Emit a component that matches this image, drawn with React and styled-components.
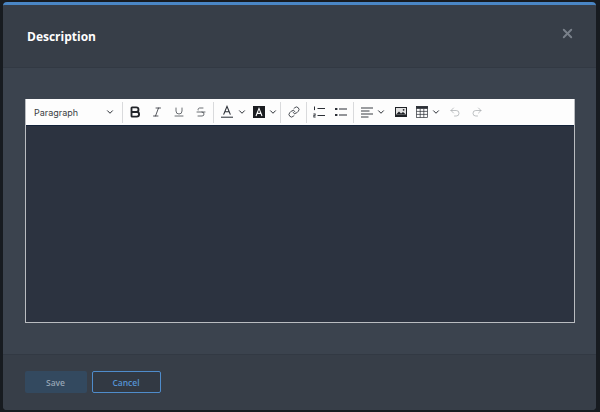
import React from 'react';
import styled, { createGlobalStyle } from 'styled-components';
import { Bold, Italic, Underline, Strikethrough, Link, Undo2, Redo2, ChevronDown, X } from 'lucide-react';

const GlobalStyle = createGlobalStyle`
  html, body {
    margin: 0;
    width: 600px;
    height: 412px;
    overflow: hidden;
    background: #171b20;
    font-family: "Open Sans", "Noto Sans", sans-serif;
  }
`;

const Chevron = () => <ChevronDown size={10} strokeWidth={2.4} color="#2b2f36" />;

const FontColorIcon = () => (
  <svg width="14" height="14" viewBox="0 0 14 14">
    <path d="M3.6 9.6 L7 1.4 L10.4 9.6 M4.8 6.8 H9.2" fill="none" stroke="#2b2f36" strokeWidth="1.1" />
    <rect x="1" y="11.6" width="12" height="1.3" fill="#55595f" />
  </svg>
);

const HighlightIcon = () => (
  <svg width="12" height="12" viewBox="0 0 12 12">
    <rect width="12" height="12" fill="#1b1d21" />
    <path d="M3 10 L6 2.4 L9 10 M4.1 7.4 H7.9" fill="none" stroke="#fff" strokeWidth="1.1" />
  </svg>
);

const NumberedIcon = () => (
  <svg width="12" height="12" viewBox="0 0 12 12" fill="#2b2f36">
    <rect x="4.5" y="2" width="7.5" height="1" />
    <rect x="4.5" y="9" width="7.5" height="1" />
    <rect x="1" y="0.5" width="1" height="3.6" />
    <path d="M0.4 7.6 H2.6 V9.8 H1.2 V10.6 H2.6 V11.4 H0.4 V9.1 H1.8 V8.4 H0.4 Z" />
  </svg>
);

const BulletIcon = () => (
  <svg width="12" height="10" viewBox="0 0 12 10" fill="#2b2f36">
    <rect x="0" y="1" width="2.4" height="2" />
    <rect x="4" y="1.5" width="8" height="1" />
    <rect x="0" y="7" width="2.4" height="2" />
    <rect x="4" y="7.5" width="8" height="1" />
  </svg>
);

const AlignIcon = () => (
  <svg width="12" height="11" viewBox="0 0 12 11" fill="#3a3e44">
    <rect y="0.5" width="12" height="1" />
    <rect y="3.5" width="8.5" height="1" />
    <rect y="6.5" width="12" height="1" />
    <rect y="9.5" width="7.5" height="1" />
  </svg>
);

const ImageIcon = () => (
  <svg width="12" height="10" viewBox="0 0 12 10">
    <rect width="12" height="10" fill="#1f2226" />
    <rect x="1" y="1" width="10" height="6.6" fill="#e2e2e2" />
    <path d="M1 7.6 L4 4.4 L6 6.4 L8 5 L11 7.6 Z" fill="#1f2226" />
    <circle cx="8.6" cy="2.8" r="0.9" fill="#1f2226" />
  </svg>
);

const TableIcon = () => (
  <svg width="12" height="12" viewBox="0 0 12 12" fill="none" stroke="#2b2f36" strokeWidth="0.7">
    <rect x="0.5" y="0.5" width="11" height="11" />
    <rect x="0.5" y="0.5" width="11" height="2" fill="#2b2f36" />
    <path d="M0.5 5.4 H11.5 M0.5 8.4 H11.5 M4.2 2.5 V11.5 M7.8 2.5 V11.5" />
  </svg>
);

const tools = [
  [
    { key: 'bold', icon: <Bold size={14} strokeWidth={3.2} color="#22252a" />, width: 22 },
    { key: 'italic', icon: <Italic size={12} strokeWidth={1.6} color="#2b2f36" />, width: 22 },
    { key: 'underline', icon: <Underline size={12} strokeWidth={1.5} color="#3a3e44" />, width: 22 },
    { key: 'strike', icon: <Strikethrough size={12} strokeWidth={1.5} color="#3a3e44" />, width: 22 },
  ],
  [
    { key: 'color', icon: <FontColorIcon />, caret: true, width: 36 },
    { key: 'highlight', icon: <HighlightIcon />, caret: true, width: 28 },
  ],
  [{ key: 'link', icon: <Link size={12} strokeWidth={1.7} color="#2b2f36" />, width: 23 }],
  [
    { key: 'numbered', icon: <NumberedIcon />, width: 21 },
    { key: 'bullet', icon: <BulletIcon />, width: 23 },
  ],
  [
    { key: 'align', icon: <AlignIcon />, caret: true, width: 36 },
    { key: 'image', icon: <ImageIcon />, width: 20 },
    { key: 'table', icon: <TableIcon />, caret: true, width: 34 },
    { key: 'undo', icon: <Undo2 size={12} strokeWidth={1.4} color="#a4a7ab" />, width: 20 },
    { key: 'redo', icon: <Redo2 size={12} strokeWidth={1.4} color="#a4a7ab" />, width: 24 },
  ],
];

const App = () => {
  return (
    <>
      <GlobalStyle />
      <Modal>
        <Header>
          <Title>Description</Title>
          <CloseButton><X size={15} strokeWidth={3} color="#79808a" /></CloseButton>
        </Header>
        <Body>
          <Editor>
            <Toolbar>
              <HeadingSelect>
                <span>Paragraph</span>
                <Chevron />
              </HeadingSelect>
              {tools.map((group, idx) => (
                <Group key={idx}>
                  {group.map(tool => (
                    <Tool key={tool.key} $width={tool.width}>
                      {tool.icon}
                      {tool.caret && <Chevron />}
                    </Tool>
                  ))}
                </Group>
              ))}
            </Toolbar>
            <Content />
          </Editor>
        </Body>
        <Footer>
          <SaveButton>Save</SaveButton>
          <CancelButton>Cancel</CancelButton>
        </Footer>
      </Modal>
    </>
  );
};

const Modal = styled.div`
  box-sizing: border-box;
  width: 593px;
  height: 408px;
  margin: 2px 0 0 3px;
  display: flex;
  flex-direction: column;
  background: #3a424c;
  border-top: 3px solid #4a86c5;
  border-radius: 4px;
  overflow: hidden;
`;

const Header = styled.div`
  box-sizing: border-box;
  height: 63px;
  padding: 0 21px 0 24px;
  display: flex;
  align-items: center;
  justify-content: space-between;
  background: #373e48;
  border-bottom: 1px solid #323943;
`;

const Title = styled.h1`
  margin: 0;
  font-size: 12px;
  font-weight: 700;
  color: #fff;
`;

const CloseButton = styled.div`
  display: flex;
  margin-top: -6px;
`;

const Body = styled.div`
  padding: 31px 21px 31px 22px;
  background: #3b434e;
`;

const Editor = styled.div`
  box-sizing: border-box;
  height: 224px;
  display: flex;
  flex-direction: column;
  border: 1px solid #b9bcc0;
  border-top: none;
`;

const Toolbar = styled.div`
  height: 26px;
  flex-shrink: 0;
  display: flex;
  align-items: center;
  background: #fdfdfd;
  border-bottom: 1px solid #14233a;
`;

const HeadingSelect = styled.div`
  box-sizing: border-box;
  width: 96px;
  padding: 0 7px 0 8px;
  display: flex;
  align-items: center;
  justify-content: space-between;
  font-family: "Inter", "Liberation Sans", sans-serif;
  font-size: 9px;
  color: #3a3e44;
`;

const Group = styled.div`
  display: flex;
  align-items: center;
  height: 21px;
  border-left: 1px solid #d9dadc;
  padding: 0 1px;
`;

const Tool = styled.div`
  width: ${props => props.$width}px;
  height: 21px;
  display: flex;
  align-items: center;
  justify-content: center;
  gap: 3px;
`;

const Content = styled.div`
  flex: 1;
  background: #2c3340;
`;

const Footer = styled.div`
  flex: 1;
  box-sizing: border-box;
  padding: 16px 22px 0 21.5px;
  display: flex;
  align-items: flex-start;
  gap: 5px;
  background: #373e48;
  border-top: 1px solid #323943;
`;

const SaveButton = styled.button`
  width: 62px;
  height: 22px;
  padding: 0;
  font: 600 8.5px "Open Sans", sans-serif;
  color: #94a3b3;
  background: #33495f;
  border: none;
  border-radius: 2px;
`;

const CancelButton = styled.button`
  box-sizing: border-box;
  width: 69px;
  height: 22px;
  padding: 0;
  font: 600 8.5px "Open Sans", sans-serif;
  color: #5593d3;
  background: #323943;
  border: 1.5px solid #4f8ccb;
  border-radius: 2px;
`;

export default App;
